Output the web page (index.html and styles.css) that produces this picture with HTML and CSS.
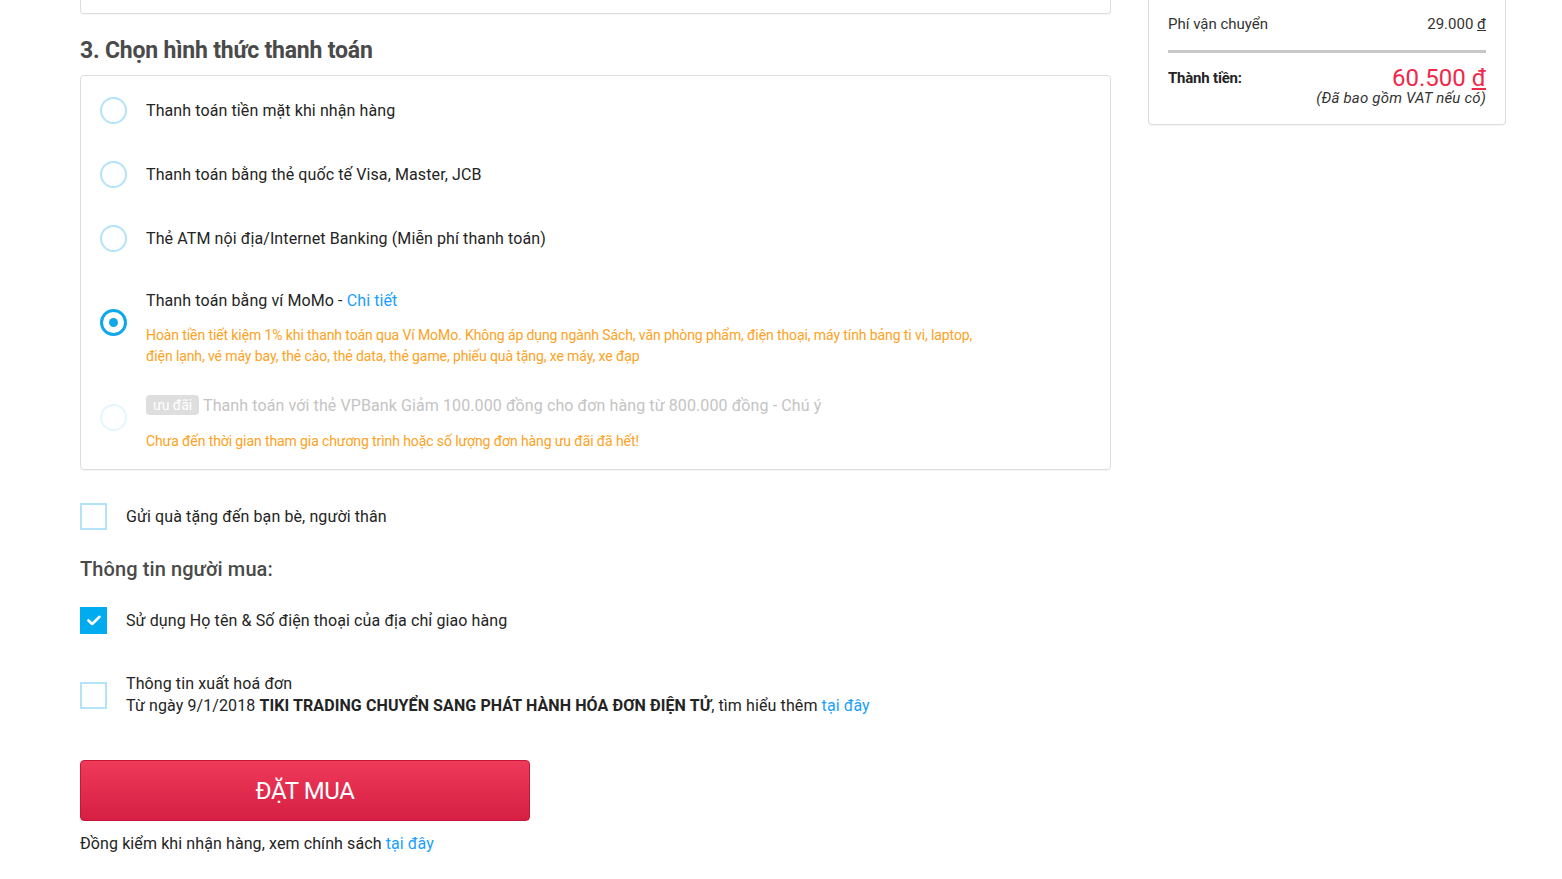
FILE: index.html
```html
<!DOCTYPE html>
<html lang="vi">
<head>
<meta charset="utf-8">
<title>Thanh toán</title>
<link rel="stylesheet" href="styles.css">
</head>
<body>
<div class="page">
  <main class="main">
    <div class="prev-card"></div>
    <h2 class="section-title">3. Chọn hình thức thanh toán</h2>
    <div class="pay-box">
      <div class="option">
        <span class="radio"></span>
        <div class="opt-body"><div class="opt-label">Thanh toán tiền mặt khi nhận hàng</div></div>
      </div>
      <div class="option">
        <span class="radio"></span>
        <div class="opt-body"><div class="opt-label">Thanh toán bằng thẻ quốc tế Visa, Master, JCB</div></div>
      </div>
      <div class="option">
        <span class="radio"></span>
        <div class="opt-body"><div class="opt-label">Thẻ ATM nội địa/Internet Banking (Miễn phí thanh toán)</div></div>
      </div>
      <div class="option option-note">
        <span class="radio radio-on"></span>
        <div class="opt-body">
          <div class="opt-label">Thanh toán bằng ví MoMo - <a class="link" href="#">Chi tiết</a></div>
          <div class="opt-note">Hoàn tiền tiết kiệm 1% khi thanh toán qua Ví MoMo. Không áp dụng ngành Sách, văn phòng phẩm, điện thoại, máy tính bảng ti vi, laptop, điện lạnh, vé máy bay, thẻ cào, thẻ data, thẻ game, phiếu quà tặng, xe máy, xe đạp</div>
        </div>
      </div>
      <div class="option option-note option-disabled">
        <span class="radio radio-faded"></span>
        <div class="opt-body">
          <div class="opt-label"><span class="badge">ưu đãi</span> Thanh toán với thẻ VPBank Giảm 100.000 đồng cho đơn hàng từ 800.000 đồng - Chú ý</div>
          <div class="opt-note">Chưa đến thời gian tham gia chương trình hoặc số lượng đơn hàng ưu đãi đã hết!</div>
        </div>
      </div>
    </div>

    <label class="check-row gift">
      <span class="checkbox"></span>
      <span class="check-text">Gửi quà tặng đến bạn bè, người thân</span>
    </label>

    <h3 class="sub-title">Thông tin người mua:</h3>

    <label class="check-row buyer">
      <span class="checkbox checkbox-on">
        <svg width="14" height="11" viewBox="0 0 14 11"><path d="M1.5 5.5 L5.2 9 L12.5 1.8" fill="none" stroke="#fff" stroke-width="2.6" stroke-linecap="round" stroke-linejoin="round"/></svg>
      </span>
      <span class="check-text">Sử dụng Họ tên &amp; Số điện thoại của địa chỉ giao hàng</span>
    </label>

    <label class="check-row invoice">
      <span class="checkbox"></span>
      <span class="check-text">Thông tin xuất hoá đơn<br>Từ ngày 9/1/2018 <b class="strong">TIKI TRADING CHUYỂN SANG PHÁT HÀNH HÓA ĐƠN ĐIỆN TỬ</b>, tìm hiểu thêm <a class="link" href="#">tại đây</a></span>
    </label>

    <button class="buy-btn" type="button">ĐẶT MUA</button>
    <p class="policy">Đồng kiểm khi nhận hàng, xem chính sách <a class="link" href="#">tại đây</a></p>
  </main>

  <aside class="side">
    <div class="summary">
      <div class="sum-row">
        <span>Phí vận chuyển</span>
        <span>29.000 <u>đ</u></span>
      </div>
      <div class="sum-line"></div>
      <div class="total-row">
        <span class="total-label">Thành tiền:</span>
        <div class="total-value">
          <div class="total-price">60.500 <u>đ</u></div>
          <div class="vat">(Đã bao gồm VAT nếu có)</div>
        </div>
      </div>
    </div>
  </aside>
</div>
</body>
</html>
```
FILE: styles.css
```css
* { box-sizing: border-box; }
html, body { margin: 0; padding: 0; background: #fff; }
body {
  font-family: Roboto, "Liberation Sans", Arial, sans-serif;
  color: #242424;
  font-size: 16px;
  letter-spacing: 0.1px;
}
.page {
  display: flex;
  align-items: flex-start;
  gap: 37px;
  padding-left: 80px;
}
.main { width: 1031px; }
.side { width: 358px; }

.prev-card {
  height: 14px;
  border: 1px solid #ddd;
  border-top: none;
  border-radius: 0 0 4px 4px;
  box-shadow: 0 1px 1px rgba(0,0,0,0.04);
}
.section-title {
  margin: 22px 0 9px;
  font-size: 23px;
  line-height: 30px;
  font-weight: 700;
  color: #4a4a4a;
  letter-spacing: -0.2px;
}
.pay-box {
  border: 1px solid #ddd;
  border-radius: 4px;
  padding: 21px 19px 17px;
  box-shadow: 0 1px 1px rgba(0,0,0,0.05);
}
.option {
  display: flex;
  align-items: center;
  gap: 19px;
  min-height: 27px;
  margin-bottom: 37px;
}
.option:last-child { margin-bottom: 0; }
.option-note .radio { margin-bottom: 12px; }
.option-disabled { margin-top: -10px; }
.radio {
  flex: none;
  width: 27px;
  height: 27px;
  border-radius: 50%;
  border: 2px solid #b2e3fa;
  display: flex;
  align-items: center;
  justify-content: center;
}
.radio-on { border: 3px solid #10a8ea; }
.radio-on::after {
  content: "";
  width: 9px;
  height: 9px;
  border-radius: 50%;
  background: #10a8ea;
}
.radio-faded { border-color: #e3f5fd; }
.opt-label {
  font-size: 16px;
  line-height: 24px;
  color: #242424;
}
.opt-note {
  margin-top: 12px;
  max-width: 840px;
  font-size: 14px;
  line-height: 21px;
  color: #fda223;
  letter-spacing: -0.1px;
}
.option-disabled .opt-note { margin-top: 13px; }
.option-disabled .opt-label { color: #c4c4c4; letter-spacing: 0.1px; }
.badge {
  display: inline-block;
  background: #dedede;
  color: #fff;
  font-size: 14px;
  line-height: 20px;
  padding: 0 7px;
  border-radius: 4px;
  vertical-align: 1px;
  letter-spacing: 0;
}
.link { color: #189eff; text-decoration: none; }

.check-row {
  display: flex;
  align-items: center;
  gap: 19px;
  font-size: 16px;
  line-height: 22px;
  color: #242424;
}
.checkbox {
  flex: none;
  width: 27px;
  height: 27px;
  border: 2px solid #b2e3fa;
  display: flex;
  align-items: center;
  justify-content: center;
}
.checkbox-on { background: #00abef; border-color: #00abef; }
.gift { margin-top: 33px; }
.sub-title {
  margin: 25px 0 24px;
  font-size: 20px;
  line-height: 28px;
  font-weight: 500;
  color: #4a4a4a;
}
.invoice { margin-top: 39px; }
.strong { font-weight: 700; letter-spacing: 0.1px; }

.buy-btn {
  display: block;
  margin-top: 43px;
  width: 450px;
  height: 61px;
  border: 1px solid #c5173a;
  border-radius: 4px;
  background: linear-gradient(#ef3a5a, #d61f43);
  color: #fff;
  font-family: Roboto, "Liberation Sans", Arial, sans-serif;
  font-size: 24px;
  letter-spacing: -0.4px;
  cursor: pointer;
}
.policy {
  margin: 11px 0 0;
  font-size: 16px;
  line-height: 24px;
  color: #242424;
}

.summary {
  border: 1px solid #ddd;
  border-top: none;
  border-radius: 0 0 4px 4px;
  padding: 13px 19px 18px;
  box-shadow: 0 1px 1px rgba(0,0,0,0.04);
}
.sum-row {
  display: flex;
  justify-content: space-between;
  font-size: 15px;
  line-height: 22px;
  color: #333;
  letter-spacing: 0;
}
.sum-line {
  margin-top: 15px;
  height: 3px;
  background: #c8c8c8;
}
.total-row {
  display: flex;
  justify-content: space-between;
  align-items: flex-start;
  margin-top: 11px;
}
.total-label {
  font-size: 15px;
  font-weight: 700;
  line-height: 22px;
  margin-top: 3px;
  color: #242424;
  letter-spacing: -0.2px;
}
.total-value { text-align: right; }
.total-price {
  margin-top: 2px;
  font-size: 24px;
  line-height: 24px;
  color: #f0284a;
  letter-spacing: 0;
}
.vat {
  font-style: italic;
  font-size: 15px;
  line-height: 16px;
  color: #333;
  letter-spacing: 0.2px;
}
```
